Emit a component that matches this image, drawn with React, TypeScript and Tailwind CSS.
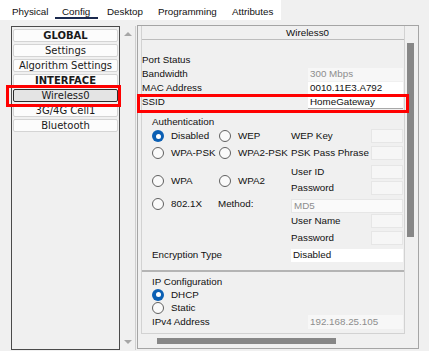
import type { ReactNode } from 'react'

// pestañas de arriba
function Tab({ children, w, active = false }: { children: ReactNode; w: string; active?: boolean }) {
  return (
    <div
      className={
        'flex h-[19px] items-center border-b-2 pl-[7px] pt-[7px] whitespace-nowrap ' +
        w +
        (active ? ' border-[#1b2a4e]' : ' border-transparent')
      }
    >
      {children}
    </div>
  )
}

function Radio({ checked = false }: { checked?: boolean }) {
  if (checked) {
    return (
      <span className="flex h-[12px] w-[12px] shrink-0 items-center justify-center rounded-full bg-[#0a5fb4]">
        <span className="h-[5px] w-[5px] rounded-full bg-white" />
      </span>
    )
  }
  return <span className="h-[12px] w-[12px] shrink-0 rounded-full border border-[#606060] bg-[#fafafa]" />
}

function Opt({ label, checked = false, w = '' }: { label: string; checked?: boolean; w?: string }) {
  return (
    <div className={'flex items-center ' + w}>
      <Radio checked={checked} />
      <span className="ml-[7px] whitespace-nowrap">{label}</span>
    </div>
  )
}

// item de la lista de la izquierda
function Item({ label, bold = false, selected = false }: { label: string; bold?: boolean; selected?: boolean }) {
  return (
    <div
      className={
        'flex h-[13px] items-center justify-center rounded-[2px] border leading-none whitespace-nowrap ' +
        (selected ? 'border-[#2e2e2e] bg-[#e4e4e4]' : 'border-[#d4d4d4] bg-[#fcfcfc]') +
        (bold ? ' font-bold' : '')
      }
    >
      {label}
    </div>
  )
}

function RightRow({ label, mt }: { label: string; mt: string }) {
  return (
    <div className={'flex h-[14px] items-center ' + mt}>
      <span className="w-[80px] whitespace-nowrap">{label}</span>
      <span className="h-[14px] w-[32px] border border-[#e6e6e6] bg-[#f6f6f6]" />
    </div>
  )
}

function LeftPanel() {
  return (
    <div className="flex w-[137px] pl-[11px] pt-[6px]">
      <div className="flex h-[324px] w-[109px] flex-col gap-[2px] border border-[#4a4a4a] px-[1px] pt-[2px] font-['DejaVu_Sans',Verdana,sans-serif] text-[10px] text-[#1a1a1a]">
        <Item label="GLOBAL" bold />
        <Item label="Settings" />
        <Item label="Algorithm Settings" />
        <Item label="INTERFACE" bold />
        <Item label="Wireless0" selected />
        <Item label="3G/4G Cell1" />
        <Item label="Bluetooth" />
      </div>
      <div className="flex h-[324px] w-[16px] flex-col items-center justify-between border-r border-[#cfcfcf] pt-[6px] pb-[6px]">
        <span className="h-0 w-0 border-x-[4px] border-b-[4px] border-x-transparent border-b-[#a6a6a6]" />
        <span className="h-0 w-0 border-x-[4px] border-t-[4px] border-x-transparent border-t-[#a6a6a6]" />
      </div>
    </div>
  )
}

function RightPanel() {
  return (
    <div className="mt-[5px] flex h-[324px] w-[282px] flex-col border border-[#a5a5a5]">
      <div className="flex h-[308px]">
        <div className="ml-[3px] flex w-[264px] flex-col overflow-hidden border-x border-b border-[#d2d2d2]">
          <div className="flex h-[14px] items-center border-b border-[#bdbdbd] pl-[144px]">Wireless0</div>

          {/* datos del puerto */}
          <div className="mt-[13px] flex h-[14px] items-center">
            <span className="w-[166px]">Port Status</span>
          </div>
          <div className="flex h-[14px] items-center">
            <span className="w-[166px]">Bandwidth</span>
            <span className="flex h-[13px] w-[95px] items-center bg-[#f7f7f7] pl-[2px] text-[#8d8d8d]">300 Mbps</span>
          </div>
          <div className="flex h-[14px] items-center">
            <span className="w-[166px]">MAC Address</span>
            <span className="flex h-[13px] w-[95px] items-center bg-white pl-[2px]">0010.11E3.A792</span>
          </div>
          <div className="flex h-[14px] items-center">
            <span className="w-[166px]">SSID</span>
            <span className="flex h-[14px] w-[95px] items-center border-b border-[#a8a8a8] bg-white pl-[2px]">HomeGateway</span>
          </div>

          {/* autenticacion */}
          <div className="mt-[5px] flex h-[15px] items-center pl-[10px]">Authentication</div>
          <div className="flex">
            <div className="flex w-[149px] flex-col pl-[10px]">
              <div className="flex h-[14px] items-center">
                <Opt label="Disabled" checked w="w-[67px]" />
                <Opt label="WEP" />
              </div>
              <div className="mt-[3px] flex h-[14px] items-center">
                <Opt label="WPA-PSK" w="w-[67px]" />
                <Opt label="WPA2-PSK" />
              </div>
              <div className="mt-[14px] flex h-[14px] items-center">
                <Opt label="WPA" w="w-[67px]" />
                <Opt label="WPA2" />
              </div>
              <div className="mt-[9px] flex h-[14px] items-center">
                <Opt label="802.1X" w="w-[66px]" />
                <span>Method:</span>
              </div>
            </div>
            <div className="flex w-[112px] flex-col">
              <RightRow label="WEP Key" mt="mt-0" />
              <RightRow label="PSK Pass Phrase" mt="mt-[3px]" />
              <RightRow label="User ID" mt="mt-[5px]" />
              <RightRow label="Password" mt="mt-[2px]" />
              <div className="mt-[4px] flex h-[14px] items-center border border-[#e6e6e6] bg-[#fafafa] pl-[2px] text-[#8d8d8d]">MD5</div>
              <RightRow label="User Name" mt="mt-[1px]" />
              <RightRow label="Password" mt="mt-[3px]" />
            </div>
          </div>
          <div className="mt-[3px] flex h-[14px] items-center">
            <span className="w-[149px] pl-[10px]">Encryption Type</span>
            <span className="flex h-[13px] w-[112px] items-center bg-white pl-[2px]">Disabled</span>
          </div>
          <div className="mt-[8px] h-[2px] bg-[#b4b4b4]" />

          {/* configuracion IP */}
          <div className="mt-[4px] flex h-[12px] items-center pl-[10px]">IP Configuration</div>
          <div className="flex h-[13px] items-center pl-[10px]">
            <Opt label="DHCP" checked />
          </div>
          <div className="flex h-[13px] items-center pl-[10px]">
            <Opt label="Static" />
          </div>
          <div className="mt-[1px] flex h-[14px] items-center">
            <span className="w-[166px] pl-[10px]">IPv4 Address</span>
            <span className="flex h-[14px] w-[95px] items-center bg-[#f7f7f7] pl-[2px] text-[#8d8d8d]">192.168.25.105</span>
          </div>
        </div>
        <div className="flex-1 pl-[2px] pt-[17px]">
          <div className="h-[194px] w-[7px] bg-[#878787]" />
        </div>
      </div>
      <div className="flex-1 pl-[19px] pt-[4px]">
        <div className="h-[6px] w-[179px] bg-[#878787]" />
      </div>
    </div>
  )
}

export default function App() {
  return (
    <div className="relative h-[351px] w-[429px] overflow-hidden bg-[#f0f0f0] font-['Liberation_Sans',Arial,sans-serif] text-[9.8px] leading-[12px] text-[#111]">
      <div className="flex h-[20px] w-[281px] bg-white pl-[5px]">
        <Tab w="w-[50px]">Physical</Tab>
        <Tab w="w-[43px]" active>Config</Tab>
        <Tab w="w-[51px] ml-[2px]">Desktop</Tab>
        <Tab w="w-[74px]">Programming</Tab>
        <Tab w="w-[56px]">Attributes</Tab>
      </div>
      <div className="flex h-[331px]">
        <LeftPanel />
        <RightPanel />
      </div>
      {/* recuadros rojos */}
      <div className="absolute left-[6px] top-[85px] h-[22px] w-[115px] border-[3px] border-[#f00]" />
      <div className="absolute left-[137px] top-[94px] h-[19px] w-[272px] border-[3px] border-[#f00]" />
    </div>
  )
}
